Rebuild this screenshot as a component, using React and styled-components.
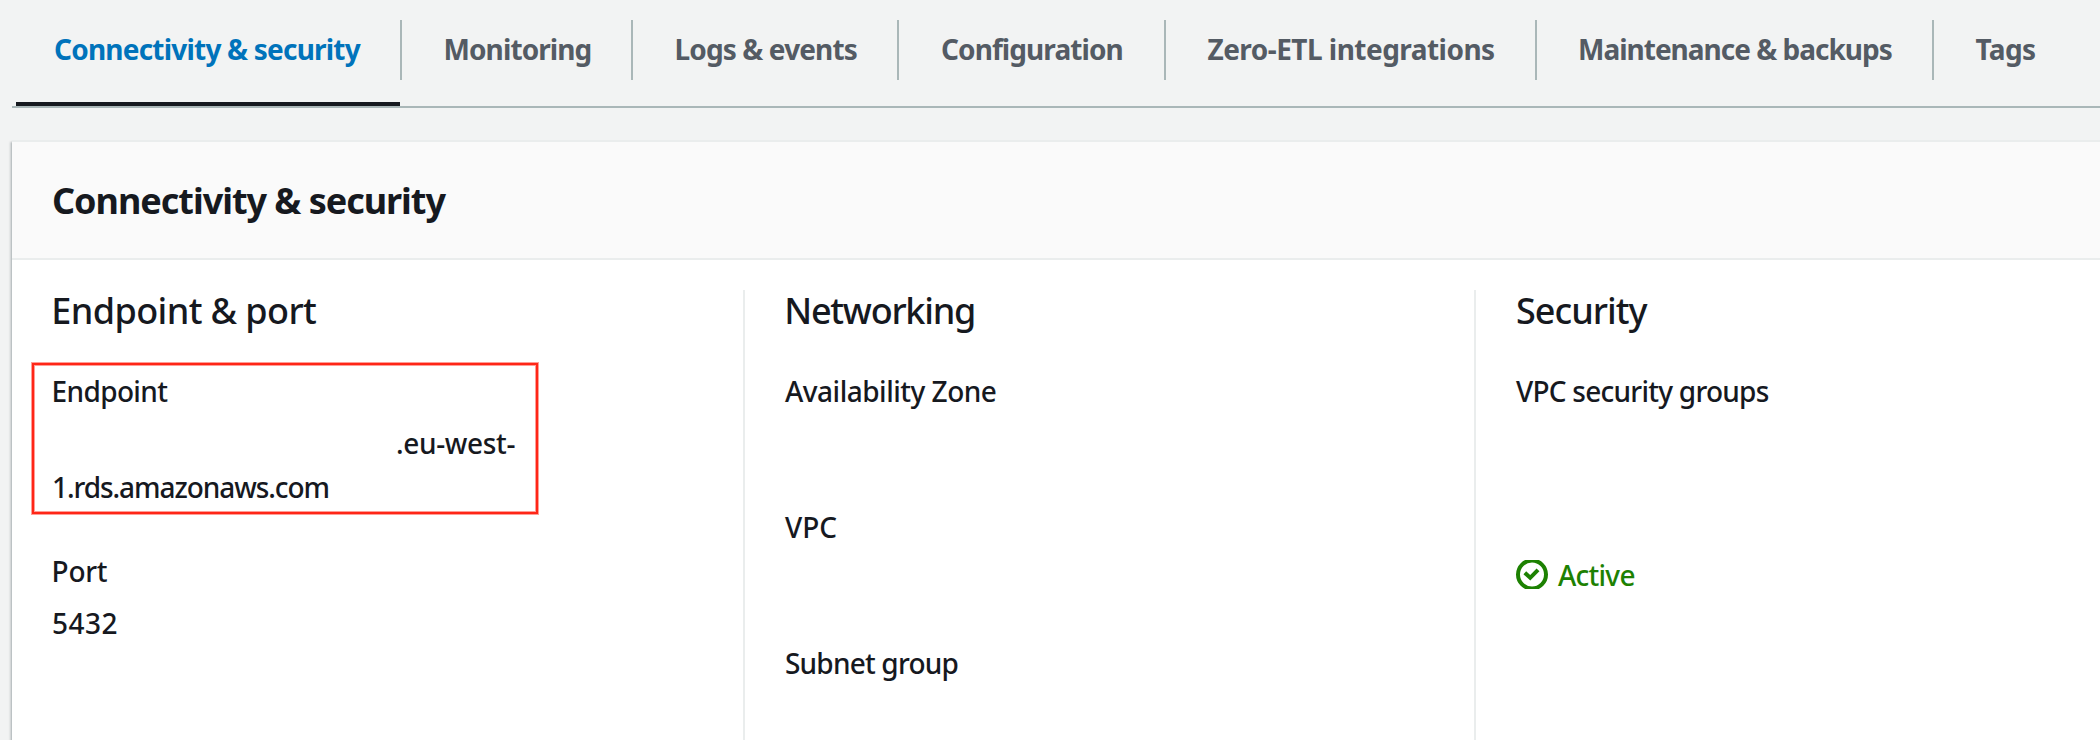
import React from "react";
import styled, { createGlobalStyle } from "styled-components";

const GlobalStyle = createGlobalStyle`
  * { box-sizing: border-box; }
  body {
    margin: 0;
    overflow: hidden;
    background: #f2f3f3;
    color: #16191f;
    font: 500 28px/44px "Noto Sans", sans-serif;
    white-space: nowrap;
  }
`;

const Page = styled.div`
  display: flex;
  flex-direction: column;
  height: 740px;
  padding-left: 12px;
  overflow: hidden;
`;

const TabBar = styled.nav`
  display: flex;
  flex: none;
  height: 108px;
  padding-left: 4px;
  border-bottom: 2px solid #aab7b8;
`;

const Tab = styled.div`
  flex: none;
  width: ${(p) => p.$width}px;
  height: 106px;
  padding-top: 20px;
  font-weight: 700;
  color: ${(p) => (p.$active ? "#0073bb" : "#545b64")};
  border-bottom: 4px solid ${(p) => (p.$active ? "#16191f" : "transparent")};
`;

const TabLabel = styled.div`
  height: 60px;
  padding: 7px 0 0 ${(p) => p.$indent}px;
  margin-right: ${(p) => (p.$last ? 0 : -2)}px;
  border-right: ${(p) => (p.$last ? 0 : 2)}px solid #aab7b8;
  letter-spacing: ${(p) => p.$track}px;
`;

const Panel = styled.section`
  display: flex;
  flex: 1;
  flex-direction: column;
  margin-top: 32px;
  background: #fff;
  border-top: 2px solid #eaeded;
  box-shadow:
    0 2px 2px 0 rgba(0, 28, 36, 0.3),
    2px 2px 2px 0 rgba(0, 28, 36, 0.15),
    -2px 2px 2px 0 rgba(0, 28, 36, 0.15);
`;

const PanelHeader = styled.header`
  height: 118px;
  padding: 37px 40px 35px;
  background: #fafafa;
  border-bottom: 2px solid #eaeded;
`;

const Heading = styled.h2`
  margin: 0;
  font-size: 36px;
  font-weight: 700;
  letter-spacing: -1.03px;
`;

const Columns = styled.div`
  display: flex;
  flex: 1;
  padding-top: 30px;
`;

const Column = styled.div`
  flex: none;
  width: ${(p) => p.$width}px;
  padding: 1px 0 0 40px;
  border-left: ${(p) => (p.$divided ? 2 : 0)}px solid #eaeded;
`;

const Title = styled.h3`
  margin: 0 0 38px ${(p) => p.$indent || 0}px;
  font-size: 36px;
  font-weight: 500;
  line-height: 40px;
  letter-spacing: ${(p) => p.$track}px;
`;

const Field = styled.div`
  position: relative;
  display: flex;
  flex-direction: column;
  gap: 8px;
  margin-bottom: 40px;
`;

const Text = styled.div`
  margin-left: ${(p) => p.$indent || 0}px;
  letter-spacing: ${(p) => p.$track || 0}px;
`;

const BlankLines = styled.div`
  height: ${(p) => p.$lines * 44}px;
`;

const Highlight = styled.div`
  position: absolute;
  left: -20px;
  top: -6px;
  width: 506px;
  height: 151px;
  border: 2px solid #ff2617;
  box-shadow:
    0 0 0 1px rgba(255, 38, 23, 0.45),
    inset 0 0 0 1px rgba(255, 38, 23, 0.45);
`;

const Status = styled.div`
  display: flex;
  gap: 10px;
  color: #1d8102;
`;

const StatusIcon = styled.svg`
  width: 32px;
  height: 29px;
  margin-top: 7px;
  fill: none;
  stroke: currentColor;
  stroke-width: 4;
`;

const tabs = [
  { label: "Connectivity & security", width: 384, indent: 38, track: -0.79 },
  { label: "Monitoring", width: 231, indent: 43.5, track: -0.9 },
  { label: "Logs & events", width: 266, indent: 43.5, track: -0.87 },
  { label: "Configuration", width: 267, indent: 44, track: -0.92 },
  { label: "Zero-ETL integrations", width: 371, indent: 43.5, track: -0.53 },
  { label: "Maintenance & backups", width: 397, indent: 43, track: -1 },
  { label: "Tags", width: 160, indent: 43.5, track: -0.6 },
];

export default function App() {
  return (
    <Page>
      <GlobalStyle />
      <TabBar>
        {tabs.map(({ label, width, indent, track }, i) => (
          <Tab key={label} $width={width} $active={i === 0}>
            <TabLabel $indent={indent} $track={track} $last={i === tabs.length - 1}>
              {label}
            </TabLabel>
          </Tab>
        ))}
      </TabBar>
      <Panel>
        <PanelHeader>
          <Heading>Connectivity & security</Heading>
        </PanelHeader>
        <Columns>
          <Column $width={731}>
            <Title $track={-0.6} $indent={-0.7}>Endpoint & port</Title>
            <Field>
              <Text $track={-0.65} $indent={-0.4}>Endpoint</Text>
              <div>
                <Text $track={-0.35} $indent={344}>.eu-west-</Text>
                <Text $track={-1.07}>1.rds.amazonaws.com</Text>
              </div>
              <Highlight />
            </Field>
            <Field>
              <Text $track={-0.3} $indent={-0.4}>Port</Text>
              <Text $track={0.5}>5432</Text>
            </Field>
          </Column>
          <Column $width={731} $divided>
            <Title $track={-1.25} $indent={-0.8}>Networking</Title>
            <Field>
              <Text $track={-0.5}>Availability Zone</Text>
              <BlankLines $lines={1} />
            </Field>
            <Field>
              <Text>VPC</Text>
              <BlankLines $lines={1} />
            </Field>
            <Field>
              <Text $track={-0.8}>Subnet group</Text>
              <BlankLines $lines={1} />
            </Field>
          </Column>
          <Column $width={626} $divided>
            <Title $track={-1}>Security</Title>
            <Field>
              <Text $track={-0.75}>VPC security groups</Text>
              <div>
                <BlankLines $lines={3} />
                <Status>
                  <StatusIcon viewBox="0 0 32 29">
                    <circle cx="16" cy="14.5" r="14" />
                    <path d="M8.8 12.8 14.2 17.8 22 9.8" />
                  </StatusIcon>
                  <Text $track={-0.75}>Active</Text>
                </Status>
              </div>
            </Field>
          </Column>
        </Columns>
      </Panel>
    </Page>
  );
}
